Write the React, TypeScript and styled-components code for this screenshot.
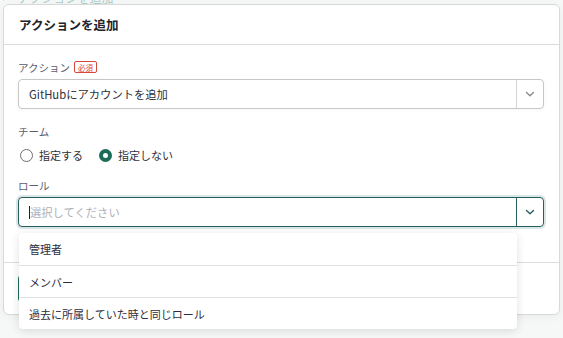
import { FunctionComponent } from "react";
import styled, { createGlobalStyle } from "styled-components";

const GlobalStyle = createGlobalStyle`
  html, body {
    margin: 0;
    padding: 0;
    background: #f6f7f7;
    font-family: "Noto Sans CJK JP", "Noto Sans", sans-serif;
    color: #2f2f3a;
  }
  * { box-sizing: border-box; }
`;

const roles = ["管理者", "メンバー", "過去に所属していた時と同じロール"];

const Chevron: FunctionComponent<{ color: string }> = ({ color }) => (
  <svg width="10" height="10" viewBox="0 0 10 10" fill="none">
    <path d="M1.5 3.5 L5 6.8 L8.5 3.5" stroke={color} strokeWidth="1.4" strokeLinecap="round" strokeLinejoin="round" />
  </svg>
);

type SelectBoxProps = {
  value?: string;
  placeholder?: string;
  focused?: boolean;
};

const SelectBox: FunctionComponent<SelectBoxProps> = ({ value, placeholder, focused }) => (
  <Select $focused={focused}>
    <SelectValue $placeholder={!value}>
      {focused && <Caret />}
      {value ?? placeholder}
    </SelectValue>
    <SelectToggle $focused={focused}>
      <Chevron color={focused ? "#285f5d" : "#8a8a8a"} />
    </SelectToggle>
  </Select>
);

type RadioProps = { label: string; checked?: boolean };

const Radio: FunctionComponent<RadioProps> = ({ label, checked }) => (
  <RadioItem>
    <RadioCircle $checked={checked} />
    <span>{label}</span>
  </RadioItem>
);

export default function App() {
  return (
    <>
      <GlobalStyle />
      <Page>
        <BackLink>
          <span>←</span>
          <span>アクションを追加</span>
        </BackLink>
        <Dialog>
          <Header>アクションを追加</Header>
          <Body>
            <Field>
              <Label>
                アクション
                <Required>必須</Required>
              </Label>
              <SelectBox value="GitHubにアカウントを追加" />
            </Field>
            <Field>
              <Label>チーム</Label>
              <RadioGroup>
                <Radio label="指定する" />
                <Radio label="指定しない" checked />
              </RadioGroup>
            </Field>
            <Field>
              <Label>ロール</Label>
              <SelectBox placeholder="選択してください" focused />
              <Menu>
                {roles.map((role) => (
                  <MenuItem key={role}>{role}</MenuItem>
                ))}
              </Menu>
            </Field>
          </Body>
          <Footer>
            <PrimaryButton>追加</PrimaryButton>
          </Footer>
        </Dialog>
      </Page>
    </>
  );
}

const Page = styled.div`
  position: relative;
  width: 563px;
  height: 338px;
  overflow: hidden;
`;

const BackLink = styled.div`
  display: flex;
  gap: 6px;
  margin-top: -10px;
  font-size: 12px;
  line-height: 16px;
  color: #a9cfc6;
`;

const Dialog = styled.div`
  position: absolute;
  top: 4px;
  left: 3px;
  width: 557px;
  height: 311px;
  display: flex;
  flex-direction: column;
  background: #ffffff;
  border: 1px solid #d9d9d9;
  border-radius: 6px;
  box-shadow: 0 2px 10px rgba(0, 0, 0, 0.05);
`;

const Header = styled.div`
  height: 40px;
  display: flex;
  align-items: center;
  padding-left: 15px;
  font-size: 12.5px;
  font-weight: 700;
  color: #23232b;
  border-bottom: 1px solid #dcdcdc;
`;

const Body = styled.div`
  flex: 1;
  display: flex;
  flex-direction: column;
  gap: 14px;
  padding: 14px 15px 0 14px;
`;

const Field = styled.div`
  position: relative;
  display: flex;
  flex-direction: column;
  gap: 4px;
`;

const Label = styled.div`
  display: flex;
  align-items: center;
  gap: 4px;
  height: 16px;
  font-size: 10.5px;
  color: #5d5d70;
`;

const Required = styled.span`
  display: inline-flex;
  align-items: center;
  height: 12px;
  padding: 0 3px;
  font-size: 7.5px;
  color: #d8473b;
  border: 1px solid #d8473b;
  border-radius: 2px;
`;

const Select = styled.div<{ $focused?: boolean }>`
  display: flex;
  height: 30px;
  background: #ffffff;
  border: 1px solid ${({ $focused }) => ($focused ? "#285f5d" : "#c7c7c7")};
  border-radius: 4px;
  box-shadow: ${({ $focused }) =>
    $focused ? "0 0 0 2px rgba(40, 120, 115, 0.18)" : "0 1px 4px rgba(0, 0, 0, 0.04)"};
`;

const SelectValue = styled.div<{ $placeholder?: boolean }>`
  flex: 1;
  display: flex;
  align-items: center;
  padding-left: 10px;
  font-size: 11.3px;
  color: ${({ $placeholder }) => ($placeholder ? "#b0b0b8" : "#2f2f3a")};
`;

const Caret = styled.span`
  display: inline-block;
  width: 1px;
  height: 13px;
  background: #222;
`;

const SelectToggle = styled.div<{ $focused?: boolean }>`
  width: 27px;
  display: flex;
  align-items: center;
  justify-content: center;
  border-left: 1px solid ${({ $focused }) => ($focused ? "#285f5d" : "#d4d4d4")};
`;

const RadioGroup = styled.div`
  display: flex;
  align-items: center;
  gap: 16px;
  height: 16px;
  margin-top: 4px;
  padding-left: 2px;
`;

const RadioItem = styled.label`
  display: flex;
  align-items: center;
  gap: 6px;
  font-size: 11px;
  color: #2f2f3a;
`;

const RadioCircle = styled.span<{ $checked?: boolean }>`
  width: 13px;
  height: 13px;
  border-radius: 50%;
  border: ${({ $checked }) => ($checked ? "4.5px solid #1d6b59" : "1.5px solid #6f6f6f")};
  background: #ffffff;
`;

const Menu = styled.div`
  position: absolute;
  top: 56px;
  left: 1px;
  width: 498px;
  background: #ffffff;
  border-radius: 4px;
  box-shadow: 0 2px 10px rgba(0, 0, 0, 0.12);
  z-index: 2;
`;

const MenuItem = styled.div`
  height: 32px;
  display: flex;
  align-items: center;
  padding-left: 10px;
  font-size: 11px;
  color: #2c2c40;
  & + & {
    border-top: 1px solid #e0e0e3;
  }
`;

const Footer = styled.div`
  display: flex;
  padding: 12px 15px 12px 14px;
  border-top: 1px solid #dcdcdc;
`;

const PrimaryButton = styled.button`
  height: 27px;
  padding: 0 20px;
  border: none;
  border-radius: 4px;
  background: #1d6b59;
  color: #ffffff;
  font-family: inherit;
  font-size: 11px;
`;
